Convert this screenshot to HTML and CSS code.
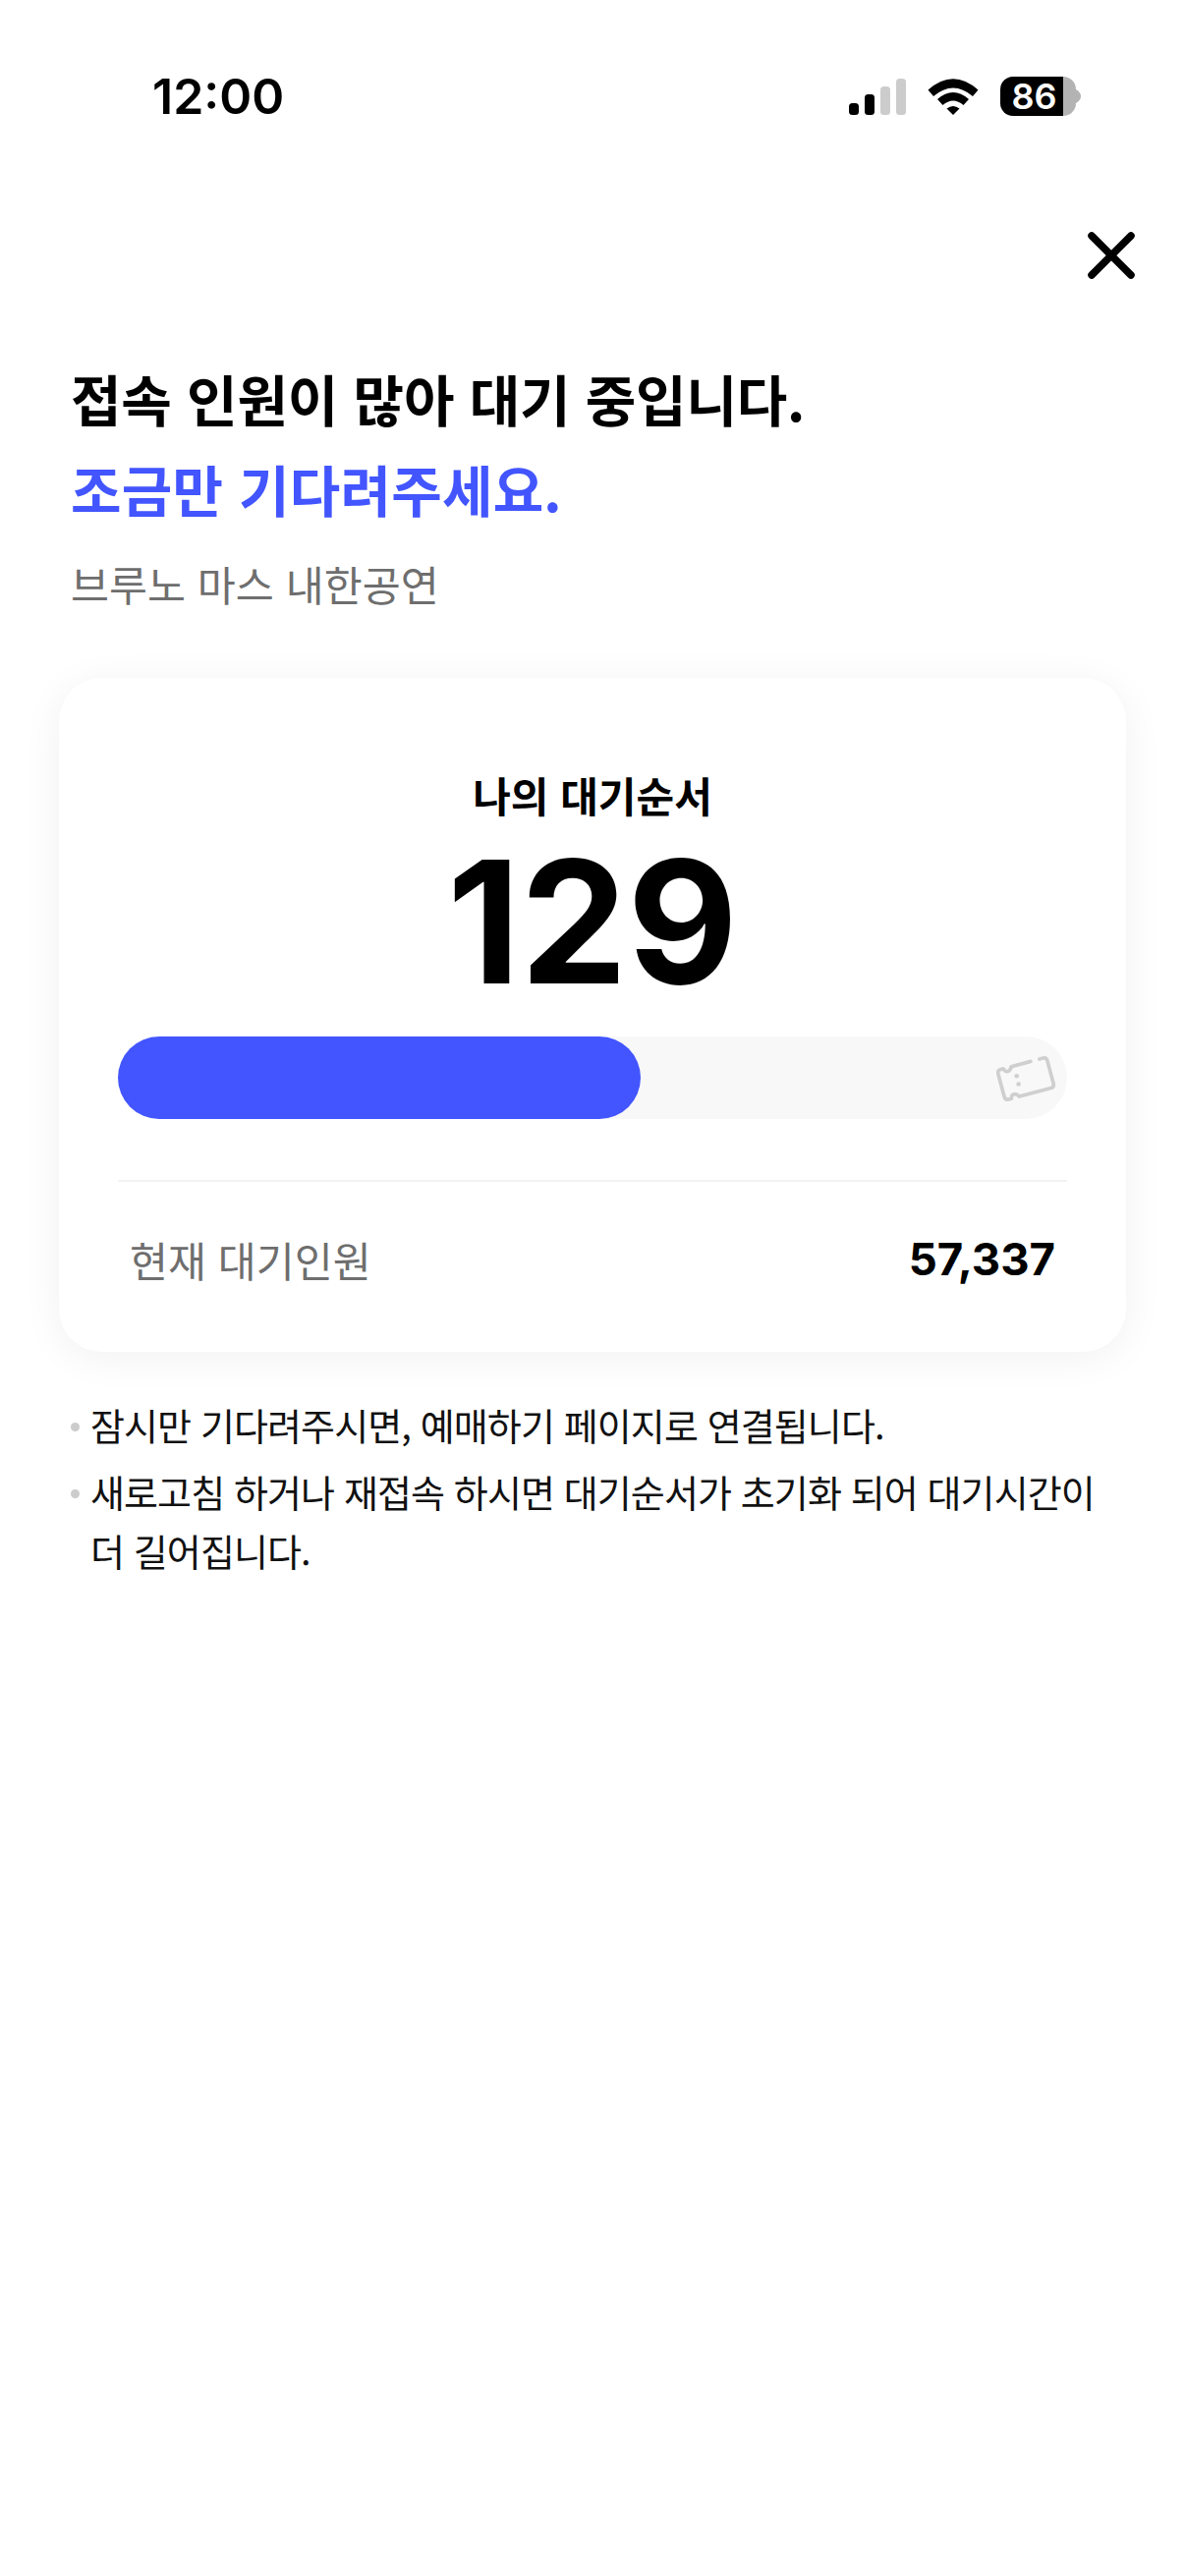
FILE: index.html
```html
<!DOCTYPE html>
<html lang="ko">
<head>
    <meta charset="UTF-8">
    <meta name="viewport" content="width=device-width, initial-scale=1.0">
    <title>대기 중</title>
    <link rel="stylesheet" href="styles.css">
</head>
<body>
    <div class="status-bar">
        <span class="time">12:00</span>
        <div class="status-icons">
            <svg class="signal" width="58" height="37" viewBox="0 0 58 37">
                <rect x="0" y="25" width="10" height="12" rx="3.5" fill="#000"/>
                <rect x="16" y="16" width="10" height="21" rx="3.5" fill="#000"/>
                <rect x="32" y="8" width="10" height="29" rx="3.5" fill="#ccc"/>
                <rect x="48" y="0" width="10" height="37" rx="3.5" fill="#ccc"/>
            </svg>
            <svg class="wifi" width="52" height="37" viewBox="0 0 52 37">
                <path d="M0.5 11.5 Q26 -11 51.5 11.5 L46 18 Q26 1 6 18 Z" fill="#000"/>
                <path d="M10 21 Q26 7 42 21 L36.500 27 Q26 18 15.500 27 Z" fill="#000"/>
                <path d="M19.500 30.500 Q26 25.500 32.500 30.500 L26 37 Z" fill="#000"/>
            </svg>
            <div class="battery">
                <div class="battery-body"><span class="battery-level">86</span></div>
                <svg width="5" height="14" viewBox="0 0 5 14"><path d="M0 0 Q5 3 5 7 Q5 11 0 14 Z" fill="#b3b3b3"/></svg>
            </div>
        </div>
    </div>

    <div class="top-nav">
        <svg width="48" height="48" viewBox="0 0 48 48">
            <path d="M4 4 L44 44 M44 4 L4 44" stroke="#000" stroke-width="7.500" stroke-linecap="round"/>
        </svg>
    </div>

    <main>
        <h1 class="title">접속 인원이 많아 대기 중입니다.<br><span class="accent">조금만 기다려주세요.</span></h1>
        <p class="event-name">브루노 마스 내한공연</p>

        <section class="queue-card">
            <h2 class="queue-label">나의 대기순서</h2>
            <div class="queue-number">129</div>
            <div class="progress">
                <div class="progress-fill" style="width: 55.1%"></div>
                <svg class="ticket" width="60" height="50" viewBox="0 0 64 54">
                    <g transform="rotate(-15 32 27)" fill="none" stroke="#cfcfcf" stroke-width="4" stroke-linecap="round" stroke-linejoin="round">
                        <path d="M42 10 H20 Q18 14 15 14 Q12 14 11 10 H8 Q4 10 4 14 V40 Q4 44 8 44 H11 Q12 40 15 40 Q18 40 20 44 H56 Q60 44 60 40 V14 Q60 10 56 10 H52"/>
                    </g>
                    <circle cx="22" cy="24" r="2.500" fill="#cfcfcf"/>
                    <circle cx="24" cy="33" r="2.500" fill="#cfcfcf"/>
                </svg>
            </div>
            <div class="queue-total">
                <span class="total-label">현재 대기인원</span>
                <span class="total-value">57,337</span>
            </div>
        </section>

        <ul class="notes">
            <li>잠시만 기다려주시면, 예매하기 페이지로 연결됩니다.</li>
            <li>새로고침 하거나 재접속 하시면 대기순서가 초기화 되어 대기시간이 더 길어집니다.</li>
        </ul>
    </main>
</body>
</html>
```

FILE: styles.css
```css
body,html{
    margin: 0;
    padding: 0;
    background: #fff;
}

body{
    width: 1206px;
    height: 2622px;
    overflow: hidden;
    font-family: "Noto Sans CJK KR", "Noto Sans", sans-serif;
    color: #000;
}

.status-bar{
    display: flex;
    justify-content: space-between;
    align-items: center;
    height: 40px;
    padding: 78px 106px 0 155px;
}

.time{
    font-family: Inter, sans-serif;
    font-size: 50px;
    font-weight: 600;
    line-height: 40px;
}

.status-icons{
    display: flex;
    align-items: center;
    gap: 22px;
}

.battery{
    display: flex;
    align-items: center;
}

.battery-body{
    width: 77px;
    height: 40px;
    border-radius: 13px;
    background: linear-gradient(to right, #000 83%, #b3b3b3 83%);
    display: flex;
    align-items: center;
    justify-content: center;
}

.battery-level{
    color: #fff;
    font-family: Inter, sans-serif;
    font-size: 36px;
    font-weight: 600;
    line-height: 40px;
    padding-right: 8px;
}

.top-nav{
    display: flex;
    justify-content: flex-end;
    padding: 118px 51px 0 0;
}

main{
    padding: 0 60px;
}

.title{
    margin: 75px 12px 0;
    font-size: 56px;
    font-weight: 700;
    line-height: 92px;
    letter-spacing: -0.2px;
}

.accent{
    color: #4255ff;
    letter-spacing: 0.2px;
}

.event-name{
    margin: 21px 12px 0;
    color: #6e6e6e;
    font-size: 42.4px;
    line-height: 60px;
}

.queue-card{
    margin-top: 66px;
    height: 686px;
    box-sizing: border-box;
    padding: 89px 60px 0;
    border-radius: 44px;
    background: #fff;
    box-shadow: 0 6px 40px rgba(0,0,0,0.06);
}

.queue-label{
    margin: 0;
    text-align: center;
    font-size: 42px;
    font-weight: 700;
    line-height: 60px;
}

.queue-number{
    margin-top: 4px;
    text-align: center;
    font-family: Inter, sans-serif;
    font-size: 173px;
    font-weight: 700;
    line-height: 190px;
}

.progress{
    position: relative;
    margin-top: 22px;
    height: 84px;
    border-radius: 42px;
    background: #f8f8f8;
}

.progress-fill{
    height: 100%;
    border-radius: 42px;
    background: #4255ff;
}

.ticket{
    position: absolute;
    top: 18px;
    right: 12px;
}

.queue-total{
    display: flex;
    justify-content: space-between;
    align-items: center;
    margin-top: 62px;
    padding: 49px 12px 0;
    border-top: 2px solid #f2f2f2;
}

.total-label{
    color: #6e6e6e;
    font-size: 42.4px;
    line-height: 60px;
}

.total-value{
    font-family: Inter, sans-serif;
    font-size: 45.5px;
    font-weight: 700;
    line-height: 60px;
}

.notes{
    list-style: none;
    margin: 44px 12px 0;
    padding: 0;
    font-size: 38px;
    line-height: 60px;
    letter-spacing: -0.9px;
    color: #111;
}

.notes li{
    position: relative;
    padding-left: 20px;
    margin-bottom: 8px;
}

.notes li::before{
    content: "";
    position: absolute;
    left: 0;
    top: 28px;
    width: 9px;
    height: 9px;
    border-radius: 50%;
    background: #ccc;
}
```
